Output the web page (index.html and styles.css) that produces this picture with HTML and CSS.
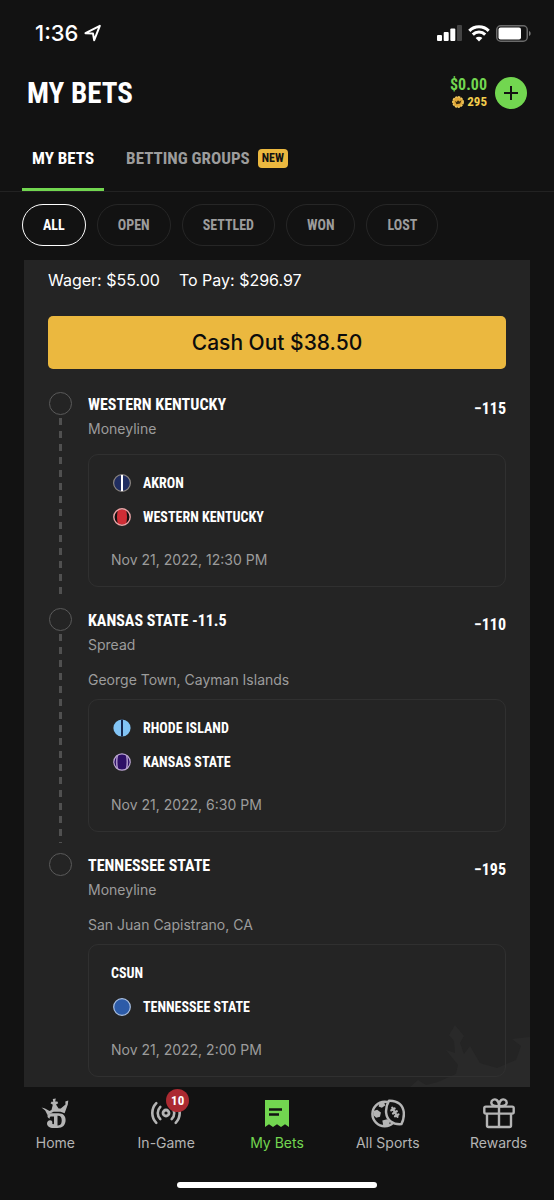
FILE: index.html
```html
<!DOCTYPE html>
<html lang="en">
<head>
<meta charset="utf-8">
<meta name="viewport" content="width=device-width, initial-scale=1">
<title>My Bets</title>
<link rel="stylesheet" href="styles.css">
</head>
<body>
<div class="app">
  <div class="status">
    <div class="status-time">
      <span>1:36</span>
      <svg width="18" height="18" viewBox="0 0 18 18" fill="none" stroke="#fff" stroke-width="2" stroke-linejoin="round"><path d="M1.500 9.200 15.800 1.800 10.200 16.200 9 9.600z"/></svg>
    </div>
    <div class="status-icons">
      <svg width="25" height="16" viewBox="0 0 25 16" fill="#fff"><rect x="0" y="10" width="5" height="6" rx="1"/><rect x="6.700" y="7" width="5" height="9" rx="1"/><rect x="13.300" y="3.500" width="5" height="12.500" rx="1"/><rect x="20" y="0" width="5" height="16" rx="1" fill="#444"/></svg>
      <svg width="22" height="17" viewBox="0 0 22 17" fill="none" stroke="#fff" stroke-width="3.100"><path d="M1.300 5.800a13.800 13.800 0 0 1 19.400 0"/><path d="M4.800 9.600a8.800 8.800 0 0 1 12.400 0"/><path d="M11 16.500 7.600 13.100a4.800 4.800 0 0 1 6.800 0z" fill="#fff" stroke="none"/></svg>
      <svg width="35" height="17" viewBox="0 0 35 17"><rect x=".75" y=".75" width="30.500" height="15.500" rx="4" fill="none" stroke="#6a6a6a" stroke-width="1.500"/><rect x="2.500" y="2.500" width="22.500" height="12" rx="2" fill="#fff"/><path d="M33 6c2.200.8 2.200 4.200 0 5z" fill="#7a7a7a"/></svg>
    </div>
  </div>

  <header class="header">
    <h1>MY BETS</h1>
    <div class="wallet">
      <div class="balances">
        <span class="cash">$0.00</span>
        <span class="coins">
          <svg width="12" height="12" viewBox="0 0 12 12"><circle cx="6" cy="6" r="5.200" fill="#e2a93a" stroke="#f3cd62" stroke-width="1.400" stroke-dasharray="2.200 .8"/><path d="M3 4.700 4.600 6 6 4.200 7.400 5.600 9.400 4.300 8.200 7.600 4.400 8.200z" fill="#3b2b0c"/></svg>
          295
        </span>
      </div>
      <button class="add" type="button" aria-label="Add funds"><svg width="16" height="16" viewBox="0 0 16 16" stroke="#121212" stroke-width="2"><path d="M8 1v14M1 8h14"/></svg></button>
    </div>
  </header>

  <nav class="tabs" aria-label="Bet views">
    <a class="tab tab-active" href="#bets">MY BETS</a>
    <a class="tab" href="#groups">BETTING GROUPS <span class="new">NEW</span></a>
  </nav>

  <div class="filters">
    <button class="pill pill-active" type="button">ALL</button>
    <button class="pill" type="button">OPEN</button>
    <button class="pill" type="button">SETTLED</button>
    <button class="pill" type="button">WON</button>
    <button class="pill" type="button">LOST</button>
  </div>

  <main class="slip">
    <svg class="watermark" width="122" height="64" viewBox="0 0 122 64" fill="#292929"><path d="M2 64 10 57 18 62 30 59 48 51 50 42 38 27 47 30 46 18 41 12 47 2 56 13 52 20 56 31 62 23 72 40 89 45 108 37 113 23 104 16 122 14V64z"/></svg>
    <p class="summary"><span>Wager: $55.00</span><span>To Pay: $296.97</span></p>
    <button class="cashout" type="button">Cash Out $38.50</button>

    <ul class="legs">
      <li class="leg">
        <div class="rail"><span class="dot"></span><span class="dashes"></span></div>
        <div class="leg-body">
          <div class="leg-head"><h2>WESTERN KENTUCKY</h2><span class="odds">−115</span></div>
          <p class="market">Moneyline</p>
          <div class="match">
            <div class="team"><svg class="ball" width="18" height="18" viewBox="0 0 18 18"><circle cx="9" cy="9" r="8.400" fill="#202d60" stroke="#8b8580" stroke-width="1.200"/><path d="M9 1v16" stroke="#fff" stroke-width="2"/></svg><span>AKRON</span></div>
            <div class="team"><svg class="ball" width="18" height="18" viewBox="0 0 18 18"><circle cx="9" cy="9" r="8.300" fill="#141010"/><path d="M5 1.600h8q2 7.400 0 14.800H5q-2-7.400 0-14.800z" fill="#d02d35"/><circle cx="9" cy="9" r="8.200" fill="none" stroke="#eba4a6" stroke-width="1.400"/></svg><span>WESTERN KENTUCKY</span></div>
            <p class="date">Nov 21, 2022, 12:30 PM</p>
          </div>
        </div>
      </li>
      <li class="leg">
        <div class="rail"><span class="dot"></span><span class="dashes"></span></div>
        <div class="leg-body">
          <div class="leg-head"><h2>KANSAS STATE -11.5</h2><span class="odds">−110</span></div>
          <p class="market">Spread</p>
          <p class="venue">George Town, Cayman Islands</p>
          <div class="match">
            <div class="team"><svg class="ball" width="18" height="18" viewBox="0 0 18 18"><circle cx="9" cy="9" r="8.600" fill="#82c4f5"/><path d="M9 .5v17" stroke="#15264d" stroke-width="2"/></svg><span>RHODE ISLAND</span></div>
            <div class="team"><svg class="ball" width="18" height="18" viewBox="0 0 18 18"><circle cx="9" cy="9" r="8.200" fill="#2e0f66"/><path d="M4.400 2.200q-1.400 6.800 0 13.600M13.600 2.200q1.400 6.800 0 13.600" fill="none" stroke="#a78fc4" stroke-width="1.600"/><circle cx="9" cy="9" r="8.200" fill="none" stroke="#bda8d2" stroke-width="1.200"/></svg><span>KANSAS STATE</span></div>
            <p class="date">Nov 21, 2022, 6:30 PM</p>
          </div>
        </div>
      </li>
      <li class="leg">
        <div class="rail"><span class="dot"></span></div>
        <div class="leg-body">
          <div class="leg-head"><h2>TENNESSEE STATE</h2><span class="odds">−195</span></div>
          <p class="market">Moneyline</p>
          <p class="venue">San Juan Capistrano, CA</p>
          <div class="match">
            <div class="team"><span>CSUN</span></div>
            <div class="team"><svg class="ball" width="18" height="18" viewBox="0 0 18 18"><circle cx="9" cy="9" r="8.300" fill="#2c5ba8" stroke="#a9c0e4" stroke-width="1.200"/></svg><span>TENNESSEE STATE</span></div>
            <p class="date">Nov 21, 2022, 2:00 PM</p>
          </div>
        </div>
      </li>
    </ul>
  </main>

  <nav class="bottom" aria-label="Main">
    <a class="item" href="#home">
      <svg width="30" height="32" viewBox="0 0 30 32" fill="#b4b4b4"><path d="M1.500 10.500 5 11.500 9.500 14 11.500 13 12.800 7.800 10.500 6.200 11.800 4.600 13.200 5 12.800 2 15.800 1.600 15.200 4.600 17.400 4.600 18.200 6.200 16 7.600 18.600 11.600 20.800 11.600 25.500 7.400 25.300 4.600 28.300 3.600 27.800 7.400 24.600 16.200 20.500 14.700 13.500 14.700 7.500 18 5.200 13.500z"/><path fill-rule="evenodd" d="M11 16.200H18.500C23.500 16.200 25.600 19 25.600 23 25.600 28 22.600 31 17.600 31H13.500C9.500 31 7 29 7 26.500 7 24.600 8.300 23.300 10 23.300 12 23.300 12.800 24.800 12.200 26.600 12.800 27.400 13.800 27.600 14 26.600V19.500H11C9.600 19.500 9.400 20.600 10.200 21.600 8 21.300 7.200 19.900 7.500 18.500 8 17 9.300 16.200 11 16.200zM17.500 18.700V28.400C20.800 28.700 21.700 26.600 21.700 23.300 21.700 20.300 20.700 18.500 17.500 18.700z"/></svg>
      <span>Home</span>
    </a>
    <a class="item" href="#in-game">
      <span class="icon-wrap">
        <svg width="32" height="32" viewBox="0 0 32 32" fill="none" stroke="#b4b4b4" stroke-width="2.600" stroke-linecap="round"><circle cx="16" cy="16" r="3" stroke-width="2.800"/><path d="M10.300 9.800a8.800 8.800 0 0 0 0 12.400M21.700 9.800a8.800 8.800 0 0 1 0 12.400M6.300 6.200a14 14 0 0 0 0 19.600M25.700 6.200a14 14 0 0 1 0 19.600"/></svg>
        <span class="badge">10</span>
      </span>
      <span>In-Game</span>
    </a>
    <a class="item item-active" href="#bets">
      <svg width="30" height="32" viewBox="0 0 30 32"><path d="M3 3H27V30L23 27.300 19 30 15 27.300 11 30 7 27.300 3 30z" fill="#72d650"/><path d="M7 12.500H20M7 17.500H17" stroke="#121212" stroke-width="2.400"/></svg>
      <span>My Bets</span>
    </a>
    <a class="item" href="#sports">
      <svg width="34" height="32" viewBox="0 0 36 32"><circle cx="14.500" cy="17" r="13" fill="#121212" stroke="#b4b4b4" stroke-width="2.600"/><g fill="#b4b4b4"><path d="M9 5.500 14 4.500 15 8 11.500 10.500 8 9zM2.500 14 6.500 12.500 10.500 15.500 9.500 20 5.500 21 2.500 18.500zM12 24 17 22.500 20 25 19 29.500 13 29.500z"/></g><path d="M19 3C28.500 2.600 34.500 8 34.800 16.500 34.900 20.500 34 24.500 32.200 27.800 23 28.500 16.800 23.500 16 15.500 15.700 11 16.800 6.500 19 3z" fill="#121212" stroke="#b4b4b4" stroke-width="2.600" stroke-linejoin="round"/><path d="M22.500 10.500 28 20M21.500 13.200 25 11.200M23.300 16.500 27.300 14.200M25.400 19.500 29 17.500" stroke="#b4b4b4" stroke-width="2.400" stroke-linecap="round"/></svg>
      <span>All Sports</span>
    </a>
    <a class="item" href="#rewards">
      <svg width="32" height="32" viewBox="0 0 32 32" fill="none" stroke="#b4b4b4" stroke-width="2.400" stroke-linejoin="round"><rect x="1.300" y="9.600" width="29.400" height="7" rx="1.500"/><path d="M4 16.600V28.500Q4 30 5.500 30H26.500Q28 30 28 28.500V16.600M16 9.600V30M16 9C12 9.500 8.300 8.500 8.300 5.500 8.300 3 11.500 1.500 13.700 3 15.500 4.300 16 6.500 16 9zM16 9C20 9.500 23.700 8.500 23.700 5.500 23.700 3 20.500 1.500 18.300 3 16.500 4.300 16 6.500 16 9z"/></svg>
      <span>Rewards</span>
    </a>
  </nav>
  <div class="home-bar"><span></span></div>
</div>
</body>
</html>
```
FILE: styles.css
```css
:root {
  --bg: #121212;
  --panel: #242424;
  --muted: #9c9c9c;
  --green: #72d650;
  --gold: #ebb83f;
  --narrow: "Liberation Sans Narrow", "Roboto Condensed", "Liberation Sans", sans-serif;
}

* { box-sizing: border-box; }

body {
  margin: 0;
  background: var(--bg);
  color: #fff;
  font-family: Inter, "Liberation Sans", sans-serif;
}

h1, h2, p, ul { margin: 0; padding: 0; }
ul { list-style: none; }
a { color: inherit; text-decoration: none; }
button { font: inherit; color: inherit; cursor: pointer; }
svg { display: block; flex: none; }

.app {
  min-height: 100vh;
  display: flex;
  flex-direction: column;
}

.status {
  display: flex;
  justify-content: space-between;
  align-items: center;
  padding: 20px 23px 0 35px;
  height: 46px;
}
.status-time {
  display: flex;
  align-items: center;
  gap: 6px;
  font-size: 22px;
  line-height: 26px;
  font-weight: 500;
}
.status-icons { display: flex; align-items: center; gap: 6px; }

.header {
  display: flex;
  justify-content: space-between;
  align-items: center;
  padding: 30px 27px 0;
}
.header h1 {
  font-family: var(--narrow);
  font-size: 29px;
  line-height: 34px;
  font-weight: 700;
}
.wallet { display: flex; align-items: center; gap: 8px; }
.balances {
  display: flex;
  flex-direction: column;
  align-items: flex-end;
  font-family: var(--narrow);
  font-weight: 700;
}
.cash { color: var(--green); font-size: 16px; line-height: 18px; }
.coins {
  display: flex;
  align-items: center;
  gap: 3px;
  color: #f3cd4c;
  font-size: 13px;
  line-height: 16px;
}
.add {
  display: grid;
  place-items: center;
  width: 32px;
  height: 32px;
  padding: 0;
  border: 0;
  border-radius: 50%;
  background: var(--green);
}

.tabs {
  display: flex;
  gap: 12px;
  margin-top: 14px;
  padding: 0 22px;
  border-bottom: 1px solid #222;
  font-family: var(--narrow);
  font-size: 17px;
  line-height: 24px;
  font-weight: 700;
  color: var(--muted);
}
.tab {
  display: flex;
  align-items: center;
  gap: 8px;
  padding: 22px 10px 18px;
  border-bottom: 3px solid transparent;
}
.tab-active { color: #fff; border-bottom-color: var(--green); }
.new {
  padding: 0 4px;
  border-radius: 4px;
  background: var(--gold);
  color: #121212;
  font-size: 12px;
  line-height: 19px;
}

.filters { display: flex; gap: 11px; padding: 12px 22px 14px; }
.pill {
  padding: 0 20px;
  border: 1px solid #262626;
  border-radius: 21px;
  background: none;
  color: var(--muted);
  font-family: var(--narrow);
  font-size: 14px;
  line-height: 40px;
  font-weight: 700;
}
.pill-active { color: #fff; border-color: #fff; }

.slip {
  position: relative;
  flex: 1;
  margin: 0 24px;
  padding: 10px 24px;
  background: var(--panel);
}
.watermark { position: absolute; right: 0; bottom: 0; }
.summary {
  display: flex;
  gap: 19px;
  font-size: 16px;
  line-height: 20px;
}
.cashout {
  display: block;
  width: 100%;
  margin: 26px 0 23px;
  padding: 0;
  border: 0;
  border-radius: 5px;
  background: var(--gold);
  color: #0c0c0c;
  font-size: 21px;
  line-height: 53px;
  font-weight: 500;
}

.leg { position: relative; display: flex; gap: 16px; }
.rail {
  display: flex;
  flex-direction: column;
  align-items: center;
  gap: 3px;
  width: 24px;
}
.dot {
  width: 23px;
  height: 23px;
  border: 1px solid #5a5a5a;
  border-radius: 50%;
}
.dashes {
  flex: 1;
  width: 3px;
  margin-bottom: 10px;
  background: repeating-linear-gradient(#505050 0 7px, transparent 7px 13px);
}
.leg-body { flex: 1; padding-bottom: 21px; }
.leg:last-child .leg-body { padding-bottom: 0; }
.leg-head {
  display: flex;
  justify-content: space-between;
  height: 24px;
  font-family: var(--narrow);
  line-height: 26px;
}
.leg-head h2 { font-size: 16px; font-weight: 700; }
.odds { padding-top: 4px; font-size: 16px; font-weight: 700; }
.market, .venue, .date {
  color: var(--muted);
  font-size: 14px;
  line-height: 20px;
}
.market { margin: 3px 0 15px; }
.venue { margin-bottom: 9px; }
.match {
  padding: 18px 22px 16px;
  border: 1px solid #303030;
  border-radius: 10px;
}
.team {
  display: flex;
  align-items: center;
  gap: 12px;
  margin-bottom: 14px;
  font-family: var(--narrow);
  font-size: 14px;
  line-height: 20px;
  font-weight: 700;
}
.ball { margin-left: 2px; }
.date { padding-top: 9px; }

.bottom {
  display: grid;
  grid-template-columns: repeat(5, 1fr);
  padding-top: 10px;
}
.item {
  display: flex;
  flex-direction: column;
  align-items: center;
  gap: 4px;
  color: #b4b4b4;
  font-size: 14px;
  line-height: 20px;
}
.item-active { color: var(--green); }
.icon-wrap { position: relative; }
.badge {
  position: absolute;
  top: -8px;
  right: -7px;
  width: 23px;
  border-radius: 50%;
  background: #ab2a31;
  color: #fff;
  font-family: var(--narrow);
  font-size: 13px;
  line-height: 23px;
  font-weight: 700;
  text-align: center;
}
.home-bar { display: flex; justify-content: center; padding: 29px 0 12px; }
.home-bar span { width: 36%; height: 6px; border-radius: 3px; background: #fff; }
```
